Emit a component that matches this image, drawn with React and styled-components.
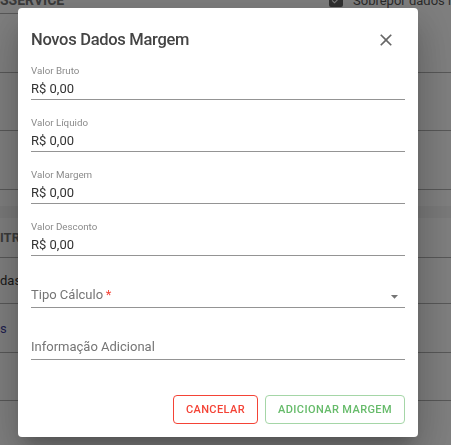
import React from "react";
import styled, { createGlobalStyle } from "styled-components";

const GlobalStyle = createGlobalStyle`
  html, body {
    margin: 0;
    padding: 0;
    overflow: hidden;
  }
  body {
    font-family: Roboto, "Liberation Sans", Arial, sans-serif;
    background: #fff;
  }
  * {
    box-sizing: border-box;
  }
`;

// ================ Background page ===================
const Page = styled.div`
  width: 451px;
  height: 445px;
  overflow: hidden;
  background: #fff;
  display: flex;
  flex-direction: column;
`;

const HeaderRow = styled.div`
  height: 14px;
  flex-shrink: 0;
  display: flex;
  justify-content: space-between;
  align-items: flex-start;
`;

const TabLabel = styled.div`
  width: 70px;
  height: 22px;
  margin-top: -8px;
  font-size: 14px;
  font-weight: 700;
  line-height: 16px;
  color: #757575;
  border-bottom: 1px solid #b0b0b0;
  white-space: nowrap;
`;

const CheckWrap = styled.div`
  display: flex;
  align-items: flex-start;
  gap: 10px;
  width: 122px;
  margin-top: -7px;
  overflow: hidden;
  white-space: nowrap;
`;

const CheckBox = styled.span`
  width: 14px;
  height: 14px;
  flex-shrink: 0;
  border-radius: 2px;
  background: #616161;
  display: flex;
  align-items: center;
  justify-content: center;
  color: #fff;
`;

const CheckText = styled.span`
  font-size: 13px;
  line-height: 16px;
  color: #555;
`;

const Row = styled.div`
  height: ${(props) => props.$h}px;
  flex-shrink: 0;
  display: flex;
  align-items: center;
  background: ${(props) => props.$bg || "#fff"};
  border-bottom: ${(props) => (props.$line ? "1px solid #b0b0b0" : "none")};
  box-sizing: content-box;
  white-space: nowrap;
`;

const HeadCell = styled.span`
  font-size: 13px;
  font-weight: 700;
  color: #757575;
`;

const Cell = styled.span`
  font-size: 13px;
  color: ${(props) => props.$color || "#333"};
`;

// ================ Dialog ===================
const Overlay = styled.div`
  position: fixed;
  inset: 0;
  background: rgba(0, 0, 0, 0.5);
  display: flex;
  align-items: center;
  padding-left: 18px;
`;

const Dialog = styled.div`
  width: 400px;
  background: #fff;
  border-radius: 4px;
  box-shadow: 0 11px 15px -7px rgba(0, 0, 0, 0.2),
    0 24px 38px 3px rgba(0, 0, 0, 0.14), 0 9px 46px 8px rgba(0, 0, 0, 0.12);
  padding: 18px 13px 13px;
  display: flex;
  flex-direction: column;
`;

const TitleRow = styled.div`
  height: 28px;
  display: flex;
  align-items: center;
  justify-content: space-between;
`;

const Title = styled.h2`
  margin: 0;
  font-size: 16.5px;
  font-weight: 500;
  letter-spacing: -0.3px;
  line-height: 28px;
  color: #444;
`;

const CloseButton = styled.button`
  width: 20px;
  height: 20px;
  margin-right: 9px;
  padding: 0;
  border: none;
  background: transparent;
  color: #666;
  display: flex;
  cursor: pointer;
`;

const Form = styled.div`
  margin-top: 11px;
  display: flex;
  flex-direction: column;
  gap: 17px;
`;

const Field = styled.div`
  height: 35px;
  display: flex;
  flex-direction: column;
  padding-top: ${(props) => (props.$empty ? "12px" : "0")};
  border-bottom: 1px solid #949494;
`;

const Label = styled.label`
  font-size: 9.75px;
  line-height: 12px;
  margin-bottom: 2px;
  color: #8a8a8a;
`;

const Value = styled.div`
  font-size: 13px;
  line-height: 19px;
  color: #333;
  display: flex;
  justify-content: space-between;
  align-items: flex-start;
`;

const Placeholder = styled.span`
  color: #757575;
`;

const Required = styled.span`
  color: #f44336;
`;

const ArrowIcon = styled.svg`
  width: 17px;
  height: 17px;
  margin-top: 3px;
  margin-right: 2px;
  fill: #757575;
`;

const Actions = styled.div`
  margin-top: 35px;
  display: flex;
  justify-content: flex-end;
  gap: 7px;
`;

const ActionButton = styled.button`
  height: 29px;
  padding: 0 12px;
  border-radius: 4px;
  background: #fff;
  font-family: Roboto, "Liberation Sans", Arial, sans-serif;
  font-size: 11px;
  font-weight: 500;
  letter-spacing: 0.4px;
  text-transform: uppercase;
  border: 1px solid ${(props) => (props.$variant === "danger" ? "#f44336" : "#a5d6a7")};
  color: ${(props) => (props.$variant === "danger" ? "#f44336" : "#66bb6a")};
  cursor: pointer;
`;

const fields = ["Valor Bruto", "Valor Líquido", "Valor Margem", "Valor Desconto"];

const App = () => {
  return (
    <>
      <GlobalStyle />
      <Page>
        <HeaderRow>
          <TabLabel>SSERVICE</TabLabel>
          <CheckWrap>
            <CheckBox>
              <svg width="12" height="12" viewBox="0 0 24 24" fill="currentColor">
                <path d="M9 16.17 4.83 12l-1.42 1.41L9 19 21 7l-1.41-1.41z" />
              </svg>
            </CheckBox>
            <CheckText>Sobrepor dados replicados</CheckText>
          </CheckWrap>
        </HeaderRow>
        <Row $h={58} $line />
        <Row $h={57} $line />
        <Row $h={58} $line />
        <Row $h={16} />
        <Row $h={12} $bg="#f4f4f4" />
        <Row $h={39} $line>
          <HeadCell>ITRA</HeadCell>
        </Row>
        <Row $h={45} $line>
          <Cell>dastr</Cell>
        </Row>
        <Row $h={48} $line>
          <Cell $color="#3f3f9f">s</Cell>
        </Row>
        <Row $h={47} $line />
        <Row $h={44} />
      </Page>

      <Overlay>
        <Dialog>
          <TitleRow>
            <Title>Novos Dados Margem</Title>
            <CloseButton aria-label="Fechar">
              <svg width="20" height="20" viewBox="0 0 24 24" fill="currentColor">
                <path d="M19 6.41 17.59 5 12 10.59 6.41 5 5 6.41 10.59 12 5 17.59 6.41 19 12 13.41 17.59 19 19 17.59 13.41 12z" />
              </svg>
            </CloseButton>
          </TitleRow>

          <Form>
            {fields.map((label) => (
              <Field key={label}>
                <Label>{label}</Label>
                <Value>R$ 0,00</Value>
              </Field>
            ))}
            <Field $empty>
              <Value>
                <Placeholder>
                  Tipo Cálculo<Required>{"\u2009*"}</Required>
                </Placeholder>
                <ArrowIcon viewBox="0 0 24 24">
                  <path d="M7 10l5 5 5-5z" />
                </ArrowIcon>
              </Value>
            </Field>
            <Field $empty>
              <Value>
                <Placeholder>Informação Adicional</Placeholder>
              </Value>
            </Field>
          </Form>

          <Actions>
            <ActionButton $variant="danger">Cancelar</ActionButton>
            <ActionButton $variant="success">Adicionar Margem</ActionButton>
          </Actions>
        </Dialog>
      </Overlay>
    </>
  );
};

export default App;
